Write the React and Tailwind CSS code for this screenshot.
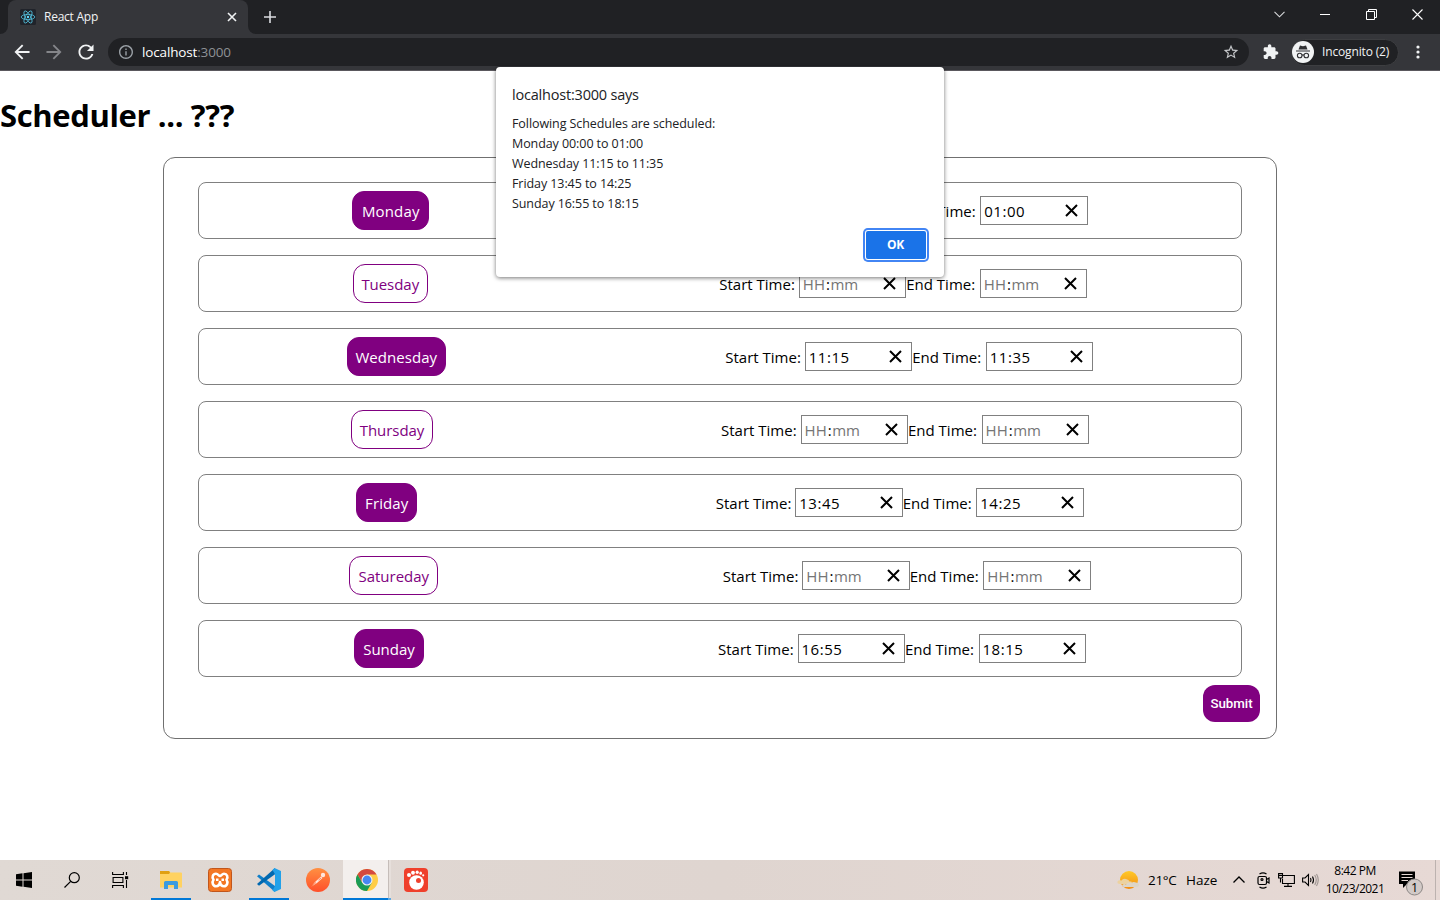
import React from "react";

const UI = "font-['Open_Sans','Noto_Sans',sans-serif]";

const days = [
  { name: "Monday", on: true, start: "00:00", end: "01:00", size: "w-[77px]", text: "tracking-[0.15px]" },
  { name: "Tuesday", on: false, size: "w-[75px]", text: "tracking-[-0.05px]" },
  { name: "Wednesday", on: true, start: "11:15", end: "11:35", size: "w-[99px]", text: "tracking-[0.05px]" },
  { name: "Thursday", on: false, size: "w-[82px]", text: "tracking-[-0.05px]" },
  { name: "Friday", on: true, start: "13:45", end: "14:25", size: "w-[61px]", text: "tracking-[0.1px]" },
  { name: "Satureday", on: false, size: "w-[89px]", text: "tracking-[0px]" },
  { name: "Sunday", on: true, start: "16:55", end: "18:15", size: "w-[70px]", text: "tracking-[0px]" },
];

function Cell({ value, placeholder, className = "" }) {
  return <span className={`${className} ${value ? "text-black" : "text-[#757575]"}`}>{value || placeholder}</span>;
}

function TimeBox({ value }) {
  const [h, m] = value ? value.split(":") : [];
  return (
    <div className="flex h-[29px] w-[107.5px] shrink-0 items-center justify-between border border-[#808080] pr-[6px] pl-[3px]">
      <div className="flex pt-px">
        <Cell value={h} placeholder="HH" className={h ? "tracking-[0.35px]" : "tracking-[0.3px]"} />
        <span className="px-[0.5px]">:</span>
        <Cell value={m} placeholder="mm" className={h ? "tracking-[0.35px]" : "tracking-[-0.1px]"} />
      </div>
      <svg width="19" height="19" viewBox="0 0 19 19" stroke="black" strokeWidth="2">
        <path d="M4 4 15 15M15 4 4 15" />
      </svg>
    </div>
  );
}

function DayRow({ day }) {
  return (
    <div className="flex h-[57px] items-center justify-around rounded-[8px] border border-[#808080] px-2">
      <button
        className={`flex h-[39px] items-center justify-center rounded-[12px] border border-[purple] pt-[2px] ${day.size} ${day.text} ${day.on ? "bg-[purple] text-white" : "bg-white text-[purple]"}`}
      >
        {day.name}
      </button>
      <div className="flex items-center whitespace-nowrap">
        <span className="w-[79.5px] pt-px tracking-[0px]">Start Time:</span>
        <TimeBox value={day.start} />
        <span className="w-[73.5px] pt-px tracking-[0px]">End Time:</span>
        <TimeBox value={day.end} />
      </div>
    </div>
  );
}

function ReactLogo() {
  return (
    <svg width="16" height="16" viewBox="0 0 16 16" fill="none" stroke="#53c1de" strokeWidth="0.8">
      <rect width="16" height="16" rx="1.5" fill="#20232a" stroke="none" />
      <ellipse cx="8" cy="8" rx="6.8" ry="2.6" />
      <ellipse cx="8" cy="8" rx="6.8" ry="2.6" transform="rotate(60 8 8)" />
      <ellipse cx="8" cy="8" rx="6.8" ry="2.6" transform="rotate(120 8 8)" />
      <circle cx="8" cy="8" r="1.2" fill="#61dafb" stroke="none" />
    </svg>
  );
}

function TabStrip() {
  return (
    <div className="flex h-[34px] bg-[#202124]">
      <div className="flex w-2 items-end bg-[#35363a]">
        <div className="h-[34px] w-2 rounded-br-[8px] bg-[#202124]" />
      </div>
      <div className="flex w-60 items-center rounded-t-[8px] bg-[#35363a] pr-[11px] pl-3">
        <ReactLogo />
        <span className="ml-2 flex-1 text-[12px] tracking-[-0.25px] text-[#f1f3f4]">React App</span>
        <svg width="10" height="10" viewBox="0 0 10 10" stroke="#f1f3f4" strokeWidth="1.6">
          <path d="M1 1 9 9M9 1 1 9" />
        </svg>
      </div>
      <div className="flex w-2 bg-[#35363a]">
        <div className="h-[34px] w-2 rounded-bl-[8px] bg-[#202124]" />
      </div>
      <div className="flex w-7 items-center justify-center">
        <svg width="12" height="12" viewBox="0 0 12 12" stroke="#dadce0" strokeWidth="1.6">
          <path d="M6 0V12M0 6H12" />
        </svg>
      </div>
      <div className="flex flex-1 justify-end">
        <div className="flex h-[28px] items-center">
          <div className="flex w-[46px] justify-center">
            <svg width="11" height="7" viewBox="0 0 11 7" fill="none" stroke="#d8d9db" strokeWidth="1.1">
              <path d="M.5 .8 5.5 5.8 10.5 .8" />
            </svg>
          </div>
          <div className="flex w-[46px] justify-center">
            <div className="h-px w-[10px] bg-white" />
          </div>
          <div className="flex w-[46px] justify-center">
            <svg width="11" height="11" viewBox="0 0 11 11" fill="none" stroke="white">
              <path d="M.5 2.5H8.5V10.5H.5ZM2.5 2.5V.5H10.5V8.5H8.5" />
            </svg>
          </div>
          <div className="flex w-[46px] justify-center">
            <svg width="11" height="11" viewBox="0 0 11 11" stroke="white" strokeWidth="1.1">
              <path d="M.5 .5 10.5 10.5M10.5 .5 .5 10.5" />
            </svg>
          </div>
        </div>
      </div>
    </div>
  );
}

function Toolbar() {
  return (
    <div className="flex h-[37px] items-center border-b border-[#5a585d] bg-[#35363a] pl-[14px]">
      <svg width="16" height="16" viewBox="3.500 3.500 17 17" fill="#f1f3f4">
        <path d="M20 11H7.83l5.59-5.59L12 4l-8 8 8 8 1.41-1.41L7.83 13H20v-2z" />
      </svg>
      <svg className="ml-4" width="16" height="16" viewBox="3.500 3.500 17 17" fill="#85868a">
        <path d="M12 4l-1.41 1.41L16.17 11H4v2h12.17l-5.58 5.59L12 20l8-8z" />
      </svg>
      <svg className="ml-4" width="16" height="16" viewBox="3.500 3.500 17 17" fill="#f1f3f4">
        <path d="M17.65 6.35A7.958 7.958 0 0 0 12 4c-4.42 0-7.99 3.58-7.99 8s3.57 8 7.99 8c3.73 0 6.84-2.55 7.73-6h-2.08A5.99 5.99 0 0 1 12 18c-3.31 0-6-2.69-6-6s2.69-6 6-6c1.66 0 3.14.69 4.22 1.78L13 11h7V4l-2.35 2.35z" />
      </svg>
      <div className="ml-[14px] flex h-7 w-[1141px] items-center rounded-full bg-[#202124] pr-[10px] pl-[11px]">
        <svg width="14" height="14" viewBox="2 2 20 20" fill="#9aa0a6">
          <path d="M11 7h2v2h-2zm0 4h2v6h-2zm1-9C6.48 2 2 6.48 2 12s4.480 10 10 10 10-4.480 10-10S17.520 2 12 2zm0 18c-4.410 0-8-3.590-8-8s3.590-8 8-8 8 3.590 8 8-3.590 8-8 8z" />
        </svg>
        <span className="ml-[9px] flex-1 pt-px text-[13.500px] tracking-[-0.15px] text-white">
          localhost<span className="text-[#8e9196]">:3000</span>
        </span>
        <svg width="16" height="16" viewBox="1 1 22 22" fill="#c4c6c9">
          <path d="M22 9.240l-7.190-.62L12 2 9.190 8.630 2 9.240l5.460 4.730L5.820 21 12 17.270 18.180 21l-1.630-7.030L22 9.240zM12 15.400l-3.760 2.270 1-4.280-3.320-2.880 4.380-.38L12 6.100l1.710 4.040 4.380.38-3.320 2.880 1 4.280L12 15.400z" />
        </svg>
      </div>
      <svg className="ml-[14px]" width="16" height="16" viewBox="1 .5 23 23" fill="#f1f3f4">
        <path d="M20.500 11H19V7c0-1.100-.9-2-2-2h-4V3.500C13 2.120 11.880 1 10.500 1S8 2.120 8 3.500V5H4c-1.100 0-1.990.9-1.990 2v3.800H3.500c1.490 0 2.700 1.210 2.700 2.700s-1.210 2.700-2.700 2.700H2V20c0 1.100.9 2 2 2h3.800v-1.500c0-1.490 1.210-2.700 2.700-2.700 1.490 0 2.700 1.210 2.700 2.700V22H17c1.100 0 2-.9 2-2v-4h1.500c1.380 0 2.500-1.120 2.500-2.500S21.880 11 20.500 11z" />
      </svg>
      <div className="ml-[12px] flex h-[27px] w-[108px] items-center rounded-full border border-[#3d3e41] bg-[#202124]">
        <svg width="22" height="22" viewBox="0 0 22 22">
          <circle cx="11" cy="11" r="11" fill="#f1f3f4" />
          <path d="M4 9.500H18V10.500H4ZM6.500 8.500 8 4.500 11 5.200 14 4.500 15.500 8.500Z" fill="#303134" />
          <g fill="none" stroke="#303134" strokeWidth="1.100">
            <circle cx="7.700" cy="14.500" r="2.300" />
            <circle cx="14.300" cy="14.500" r="2.300" />
            <path d="M10 14.200Q11 13.500 12 14.200" />
          </g>
        </svg>
        <span className="ml-2 text-[12px] tracking-[-0.15px] whitespace-nowrap text-[#f1f3f4]">Incognito (2)</span>
      </div>
      <svg className="ml-[17px]" width="4" height="14" viewBox="0 0 4 14" fill="#f1f3f4">
        <circle cx="2" cy="2" r="1.600" />
        <circle cx="2" cy="7" r="1.600" />
        <circle cx="2" cy="12" r="1.600" />
      </svg>
    </div>
  );
}

function AlertDialog() {
  return (
    <div className="absolute top-[67px] left-[496px] flex h-[210px] w-[448px] flex-col rounded-[4px] bg-white px-4 pt-[17px] text-[#202124] shadow-[0_1px_4px_rgba(0,0,0,0.55)]">
      <div className="h-[30px] text-[14.500px] leading-[22px] tracking-[-0.2px]">localhost:3000 says</div>
      <div className="text-[12.500px] leading-5 tracking-[-0.08px]">
        <p>Following Schedules are scheduled:</p>
        <p>Monday 00:00 to 01:00</p>
        <p>Wednesday 11:15 to 11:35</p>
        <p>Friday 13:45 to 14:25</p>
        <p>Sunday 16:55 to 18:15</p>
      </div>
      <button className="mt-[17px] mr-[2px] flex h-7 w-[60px] items-center justify-center self-end rounded-[2px] bg-[#1a73e8] pr-px text-[12px] font-bold tracking-[-0.3px] text-white shadow-[0_0_0_1px_white,0_0_0_3px_#4285f4]">
        OK
      </button>
    </div>
  );
}

function TaskIcon({ children, open }) {
  return (
    <div className="flex h-full w-[49px] justify-center">
      <div className={`flex h-full w-10 items-center justify-center border-y-2 border-t-transparent ${open ? "border-b-[#0078d7]" : "border-b-transparent"}`}>
        {children}
      </div>
    </div>
  );
}

function ActiveTaskIcon({ children }) {
  return (
    <div className="flex h-full w-[49px] pl-[0.5px]">
      <div className="flex h-full w-[45px] items-center justify-center border-b-2 border-b-[#0078d7] bg-[#f3efed] pt-[2px] pl-[3px]">{children}</div>
      <div className="h-full w-px border-b-2 border-b-[#5ca9e4] bg-[#c5bdb9]" />
      <div className="h-full w-[2px] border-b-2 border-b-[#5ca9e4] bg-[#e6dfdb]" />
    </div>
  );
}

function Taskbar() {
  return (
    <div className="flex h-10 items-center bg-linear-to-r from-[#e0d9d4] via-[#dfd5d0] to-[#e7d9d5] text-black">
      <div className="flex w-12 justify-center">
        <svg width="16" height="16" viewBox="0 0 16 16">
          <path d="M0 2.300 6.500 1.300V7.500H0ZM7.500 1.200 16 0V7.500H7.500ZM0 8.500H6.500V14.700L0 13.700ZM7.500 8.500H16V16L7.500 14.800Z" />
        </svg>
      </div>
      <div className="flex w-12 justify-center">
        <svg width="16" height="16" viewBox="0 0 16 16" fill="none" stroke="black" strokeWidth="1.200">
          <circle cx="10.300" cy="5.700" r="5" />
          <path d="M6.700 9.300 .5 15.500" />
        </svg>
      </div>
      <div className="mr-[2.500px] flex w-12 justify-center">
        <svg width="17" height="16" viewBox="0 0 17 16" fill="none" stroke="black" strokeWidth="1.100">
          <path d="M.6 0V2.500H11.400V0M.6 16V13.500H11.400V16M1.100 5.500H10.900V10.500H1.100ZM14.500 0V3M14.500 8V16" />
          <path d="M13 4.200H16.200V7.200H13Z" fill="black" stroke="none" />
        </svg>
      </div>
      <TaskIcon open>
        <svg width="22" height="18" viewBox="0 0 22 18">
          <path d="M0 0H9L10.500 1.500H21Q22 1.500 22 2.500V16.500H0Z" fill="#ffd261" />
          <path d="M0 0H9L10 1.500 9 3H0Z" fill="#e0a012" />
          <path d="M4 18V11.500Q4 10 5.500 10H16.500Q18 10 18 11.500V18H14V14H8V18Z" fill="#3c9be0" />
        </svg>
      </TaskIcon>
      <TaskIcon>
        <svg width="24" height="24" viewBox="0 0 24 24">
          <rect x=".5" y=".5" width="23" height="23" rx="3" fill="#f37623" stroke="#c1561c" />
          <path d="M5.500 11.700C3.500 9 5 5.700 8 5.700 10 5.700 10.800 8 12 8S14 5.700 16 5.700C19 5.700 20.500 9 18.500 11.700 20.500 14.500 19 18.300 16 18.300 13 18.300 12.300 16.500 12 14 11.700 16.500 11 18.300 8 18.300 5 18.300 3.500 14.500 5.500 11.700ZM8 11.800H10.500M13.500 11.800H16" fill="none" stroke="white" strokeWidth="2.600" strokeLinejoin="round" />
        </svg>
      </TaskIcon>
      <TaskIcon open>
        <svg width="24" height="24" viewBox="0 0 24 24">
          <path d="M0 8.200 2 6.500 18 18V24Z" fill="#0f7ec9" />
          <path d="M0 16 2 17.700 18 6.200V0Z" fill="#0068b0" />
          <path d="M17.500 0 24 3V21L17.500 24 15.500 22.500 18 18V6.200L15.500 2Z" fill="#22a1e9" />
        </svg>
      </TaskIcon>
      <TaskIcon>
        <svg width="24" height="24" viewBox="0 0 24 24">
          <defs>
            <linearGradient id="postman" x2="0" y2="1">
              <stop stopColor="#ff9042" />
              <stop offset="1" stopColor="#ff4f2a" />
            </linearGradient>
          </defs>
          <circle cx="12" cy="12" r="12" fill="url(#postman)" />
          <path d="M5.500 18.500 9 14 15 8.500 16.500 10 11 15Z" fill="#ffe6dc" />
          <circle cx="17" cy="7" r="2.200" fill="#ffe6dc" />
          <path d="M6 18 10 14.500M12.500 12 15 10" stroke="#ff6c37" strokeWidth=".8" />
        </svg>
      </TaskIcon>
      <ActiveTaskIcon>
        <svg width="22" height="22" viewBox="0 0 22 22">
          <circle cx="11" cy="11" r="11" fill="#ffcd46" />
          <path d="M1.470 5.500A11 11 0 0 1 20.530 5.500H11L6.240 13.750Z" fill="#d5493f" />
          <path d="M1.470 5.500A11 11 0 0 0 11 22L15.760 13.750H6.240Z" fill="#1a9b56" />
          <circle cx="11" cy="11" r="5.500" fill="#f1f1f1" />
          <circle cx="11" cy="11" r="4.400" fill="#4787f3" />
        </svg>
      </ActiveTaskIcon>
      <TaskIcon>
        <svg width="24" height="24" viewBox="0 0 24 24">
          <rect width="24" height="24" rx="4" fill="#ef402c" />
          <g fill="white">
            <circle cx="12.500" cy="14.500" r="7.300" />
            <ellipse cx="5" cy="7" rx="2" ry="2" />
            <ellipse cx="9" cy="4.800" rx="1.900" ry="2" />
            <ellipse cx="13.200" cy="4.200" rx="1.600" ry="1.800" />
            <ellipse cx="16.700" cy="5.200" rx="1.300" ry="1.600" />
            <circle cx="19.200" cy="7.300" r="1.100" />
          </g>
          <circle cx="14.500" cy="12.500" r="2.500" fill="#ef402c" />
        </svg>
      </TaskIcon>
      <div className="flex h-full flex-1 items-center justify-end">
        <svg width="23" height="20" viewBox="0 0 23 20">
          <defs>
            <linearGradient id="haze" x2="0" y2="1">
              <stop stopColor="#ffc928" />
              <stop offset="1" stopColor="#f28c13" />
            </linearGradient>
          </defs>
          <circle cx="12" cy="10" r="9" fill="url(#haze)" />
          <path d="M3 14Q0 14 .5 11.500 1.500 9.800 4.500 10.500 6 8 9 9 12 9.500 12.500 11.500 15 11 15 12.500 14.500 14 12.500 14Z" fill="#ecd2a0" />
          <path d="M7 17Q4.500 16.500 5.500 14.800 7 13.500 9 14.500 11 11.500 14.500 13 16 11.500 19 12.500 22.500 13.500 22 15.500 21.500 17 19 17Z" fill="#ddd5c8" />
        </svg>
        <span className="ml-[8px] w-[38px] text-[13.500px] tracking-[-0.3px] whitespace-nowrap">21°C</span>
        <span className="w-[47px] text-[13.500px] tracking-[0px]">Haze</span>
        <svg width="12" height="8" viewBox="0 0 12 8" fill="none" stroke="black" strokeWidth="1.300">
          <path d="M.5 6.500 6 1 11.500 6.500" />
        </svg>
        <svg className="ml-[12px]" width="13" height="17" viewBox="0 0 13 17" fill="none" stroke="black" strokeWidth="1.200">
          <path d="M2.500 2Q6 -.3 9.500 2M2.500 15Q6 17.300 9.500 15M9.500 7.500 12 6V11L9.500 9.500" />
          <rect x="1" y="4.500" width="8.500" height="8" rx="1.500" />
          <circle cx="5" cy="7.500" r="1" />
        </svg>
        <svg className="ml-[8px]" width="17" height="14" viewBox="0 0 17 14" fill="none" stroke="black" strokeWidth="1.100">
          <path d="M5 2.500H16.400V10.500H4.500V6M10 10.500V13.400M6 13.400H14M.6 .6H4.500V5H.6ZM2.500 5V9.500M.6 2.500H4.500" />
        </svg>
        <svg className="ml-[7px]" width="17" height="14" viewBox="0 0 17 14" fill="none" stroke="black" strokeWidth="1.100">
          <path d="M.6 5H3L6.500 1.500V12.500L3 9H.6ZM8.500 5Q9.500 7 8.500 9" />
          <path d="M10.500 3.500Q12.500 7 10.500 10.500" />
          <path d="M12.700 2Q15.800 7 12.700 12M14.500 1Q18 7 14.500 13" stroke="#9d9491" />
        </svg>
        <div className="ml-[6px] flex w-[60px] flex-col items-center pb-px text-[12px] leading-[18px] tracking-[-0.5px] whitespace-nowrap">
          <span>8:42 PM</span>
          <span>10/23/2021</span>
        </div>
        <svg className="mt-[8px] ml-[14px]" width="25" height="27" viewBox="0 0 25 27">
          <path d="M0 .5H16V13H8L4 17V13H0Z" />
          <path d="M2.500 3.500H13.500M2.500 6.500H13.500M2.500 9.500H9" stroke="#e5d8d4" strokeWidth="1.100" />
          <circle cx="15.500" cy="16" r="8" fill="#d2cac7" stroke="#8d8886" />
          <text x="15.500" y="20.500" textAnchor="middle" fontSize="12.500" className={UI}>1</text>
        </svg>
        <div className="mr-[4px] ml-[11px] h-full w-px bg-[#bcb2af]" />
      </div>
    </div>
  );
}

export default function App() {
  return (
    <div className={`relative flex h-[900px] w-[1440px] flex-col overflow-hidden bg-white ${UI}`}>
      <TabStrip />
      <Toolbar />
      <main className="flex-1 text-[15px] text-black">
        <h1 className="h-[86px] pt-[20px] text-[31px] leading-[48px] font-bold tracking-[-0.38px]">Scheduler ... ???</h1>
        <section className="mx-auto h-[582px] w-[1114px] rounded-[12px] border border-[#707070] pt-6">
          <div className="flex flex-col gap-4 px-[34px]">
            {days.map((day) => (
              <DayRow key={day.name} day={day} />
            ))}
          </div>
          <div className="mt-2 flex justify-end pr-4">
            <button className="h-[37px] w-[57px] rounded-[12px] bg-[purple] font-['Roboto',sans-serif] text-[13.3px] font-medium tracking-[-0.05px] text-white">
              Submit
            </button>
          </div>
        </section>
      </main>
      <Taskbar />
      <AlertDialog />
    </div>
  );
}
